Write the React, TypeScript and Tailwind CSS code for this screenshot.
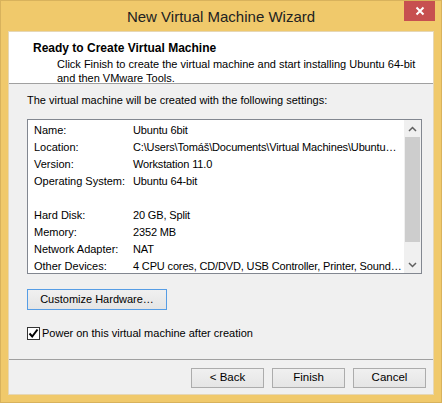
import React from "react"

const rows: [string, string][] = [
  ["Name:", "Ubuntu 6bit"],
  ["Location:", "C:\\Users\\Tomáš\\Documents\\Virtual Machines\\Ubuntu…"],
  ["Version:", "Workstation 11.0"],
  ["Operating System:", "Ubuntu 64-bit"],
  ["", ""],
  ["Hard Disk:", "20 GB, Split"],
  ["Memory:", "2352 MB"],
  ["Network Adapter:", "NAT"],
  ["Other Devices:", "4 CPU cores, CD/DVD, USB Controller, Printer, Sound…"],
]

function WinButton({ label }: { label: string }) {
  return (
    <button className="h-[20px] w-[73px] border border-[#acacac] bg-gradient-to-b from-[#f0f0f0] to-[#e5e5e5] text-[11.5px] text-black leading-none">
      {label}
    </button>
  )
}

export default function App() {
  return (
    <div
      className="w-[442px] h-[403px] bg-[#f0c96b] border border-[#d8b25c] flex flex-col px-[7px] pb-[7px] text-[11px] text-black"
      style={{ fontFamily: '"Liberation Sans", Arial, sans-serif' }}
    >
      {/* title bar */}
      <div className="h-[30px] flex items-center relative">
        <div className="flex-1 text-center text-[15px] text-[#222] pt-[2px]">New Virtual Machine Wizard</div>
        <div className="absolute right-[-1px] top-0 w-[31px] h-[20px] bg-[#c75050] flex items-center justify-center">
          <svg width="10" height="10" viewBox="0 0 10 10">
            <path d="M1.5 1.5 L8.5 8.5 M8.5 1.5 L1.5 8.5" stroke="#fff" strokeWidth="2" />
          </svg>
        </div>
      </div>

      <div className="flex-1 flex flex-col bg-[#f0f0f0] border border-[#d8b25c]/40">
        {/* header */}
        <div className="h-[52px] bg-white border-b border-[#a0a0a0] pt-[8px]">
          <div className="pl-[24px] font-bold text-[12px] leading-[16px]">Ready to Create Virtual Machine</div>
          <div className="pl-[48px] leading-[14px] mt-[1px]">
            Click Finish to create the virtual machine and start installing Ubuntu 64-bit
            <br />
            and then VMware Tools.
          </div>
        </div>

        {/* body */}
        <div className="flex-1 flex flex-col pl-[18px] pr-[11px]">
          <div className="pt-[8px] leading-[16px]">The virtual machine will be created with the following settings:</div>

          <div className="mt-[11px] h-[155px] border border-[#828790] bg-white flex">
            <div className="flex-1 pt-[2px] pl-[6px] overflow-hidden">
              {rows.map(([k, v], i) => (
                <div key={i} className="h-[17px] leading-[17px] flex whitespace-nowrap">
                  <span className="w-[99px] shrink-0">{k}</span>
                  <span className="tracking-[-0.15px]">{v}</span>
                </div>
              ))}
            </div>
            <div className="w-[17px] bg-[#f0f0f0] flex flex-col">
              <div className="h-[17px] flex items-center justify-center">
                <svg width="9" height="6" viewBox="0 0 9 6">
                  <path d="M1 5 L4.5 1.5 L8 5" stroke="#606060" strokeWidth="1.5" fill="none" />
                </svg>
              </div>
              <div className="h-[105px] mx-[1px] bg-[#cdcdcd]" />
              <div className="flex-1" />
              <div className="h-[17px] flex items-center justify-center">
                <svg width="9" height="6" viewBox="0 0 9 6">
                  <path d="M1 1 L4.5 4.5 L8 1" stroke="#606060" strokeWidth="1.5" fill="none" />
                </svg>
              </div>
            </div>
          </div>

          <div className="mt-[15px]">
            <button className="h-[21px] w-[140px] border border-[#569de5] bg-gradient-to-b from-[#f0f0f0] to-[#e5e5e5] text-[11px] text-black leading-none">
              Customize Hardware…
            </button>
          </div>

          <div className="mt-[15px] flex items-center gap-[2px]">
            <div className="w-[13px] h-[13px] border border-[#333] bg-white flex items-center justify-center">
              <svg width="11" height="11" viewBox="0 0 11 11">
                <path d="M1.5 5.5 L4.2 8.5 L9.5 1.5" stroke="#000" strokeWidth="2" fill="none" />
              </svg>
            </div>
            <span className="leading-[16px]">Power on this virtual machine after creation</span>
          </div>
        </div>

        {/* footer */}
        <div className="border-t border-[#a0a0a0] h-[35px] flex items-start justify-end gap-[8px] pt-[8px] pr-[7px]">
          <WinButton label="< Back" />
          <WinButton label="Finish" />
          <WinButton label="Cancel" />
        </div>
      </div>
    </div>
  )
}
